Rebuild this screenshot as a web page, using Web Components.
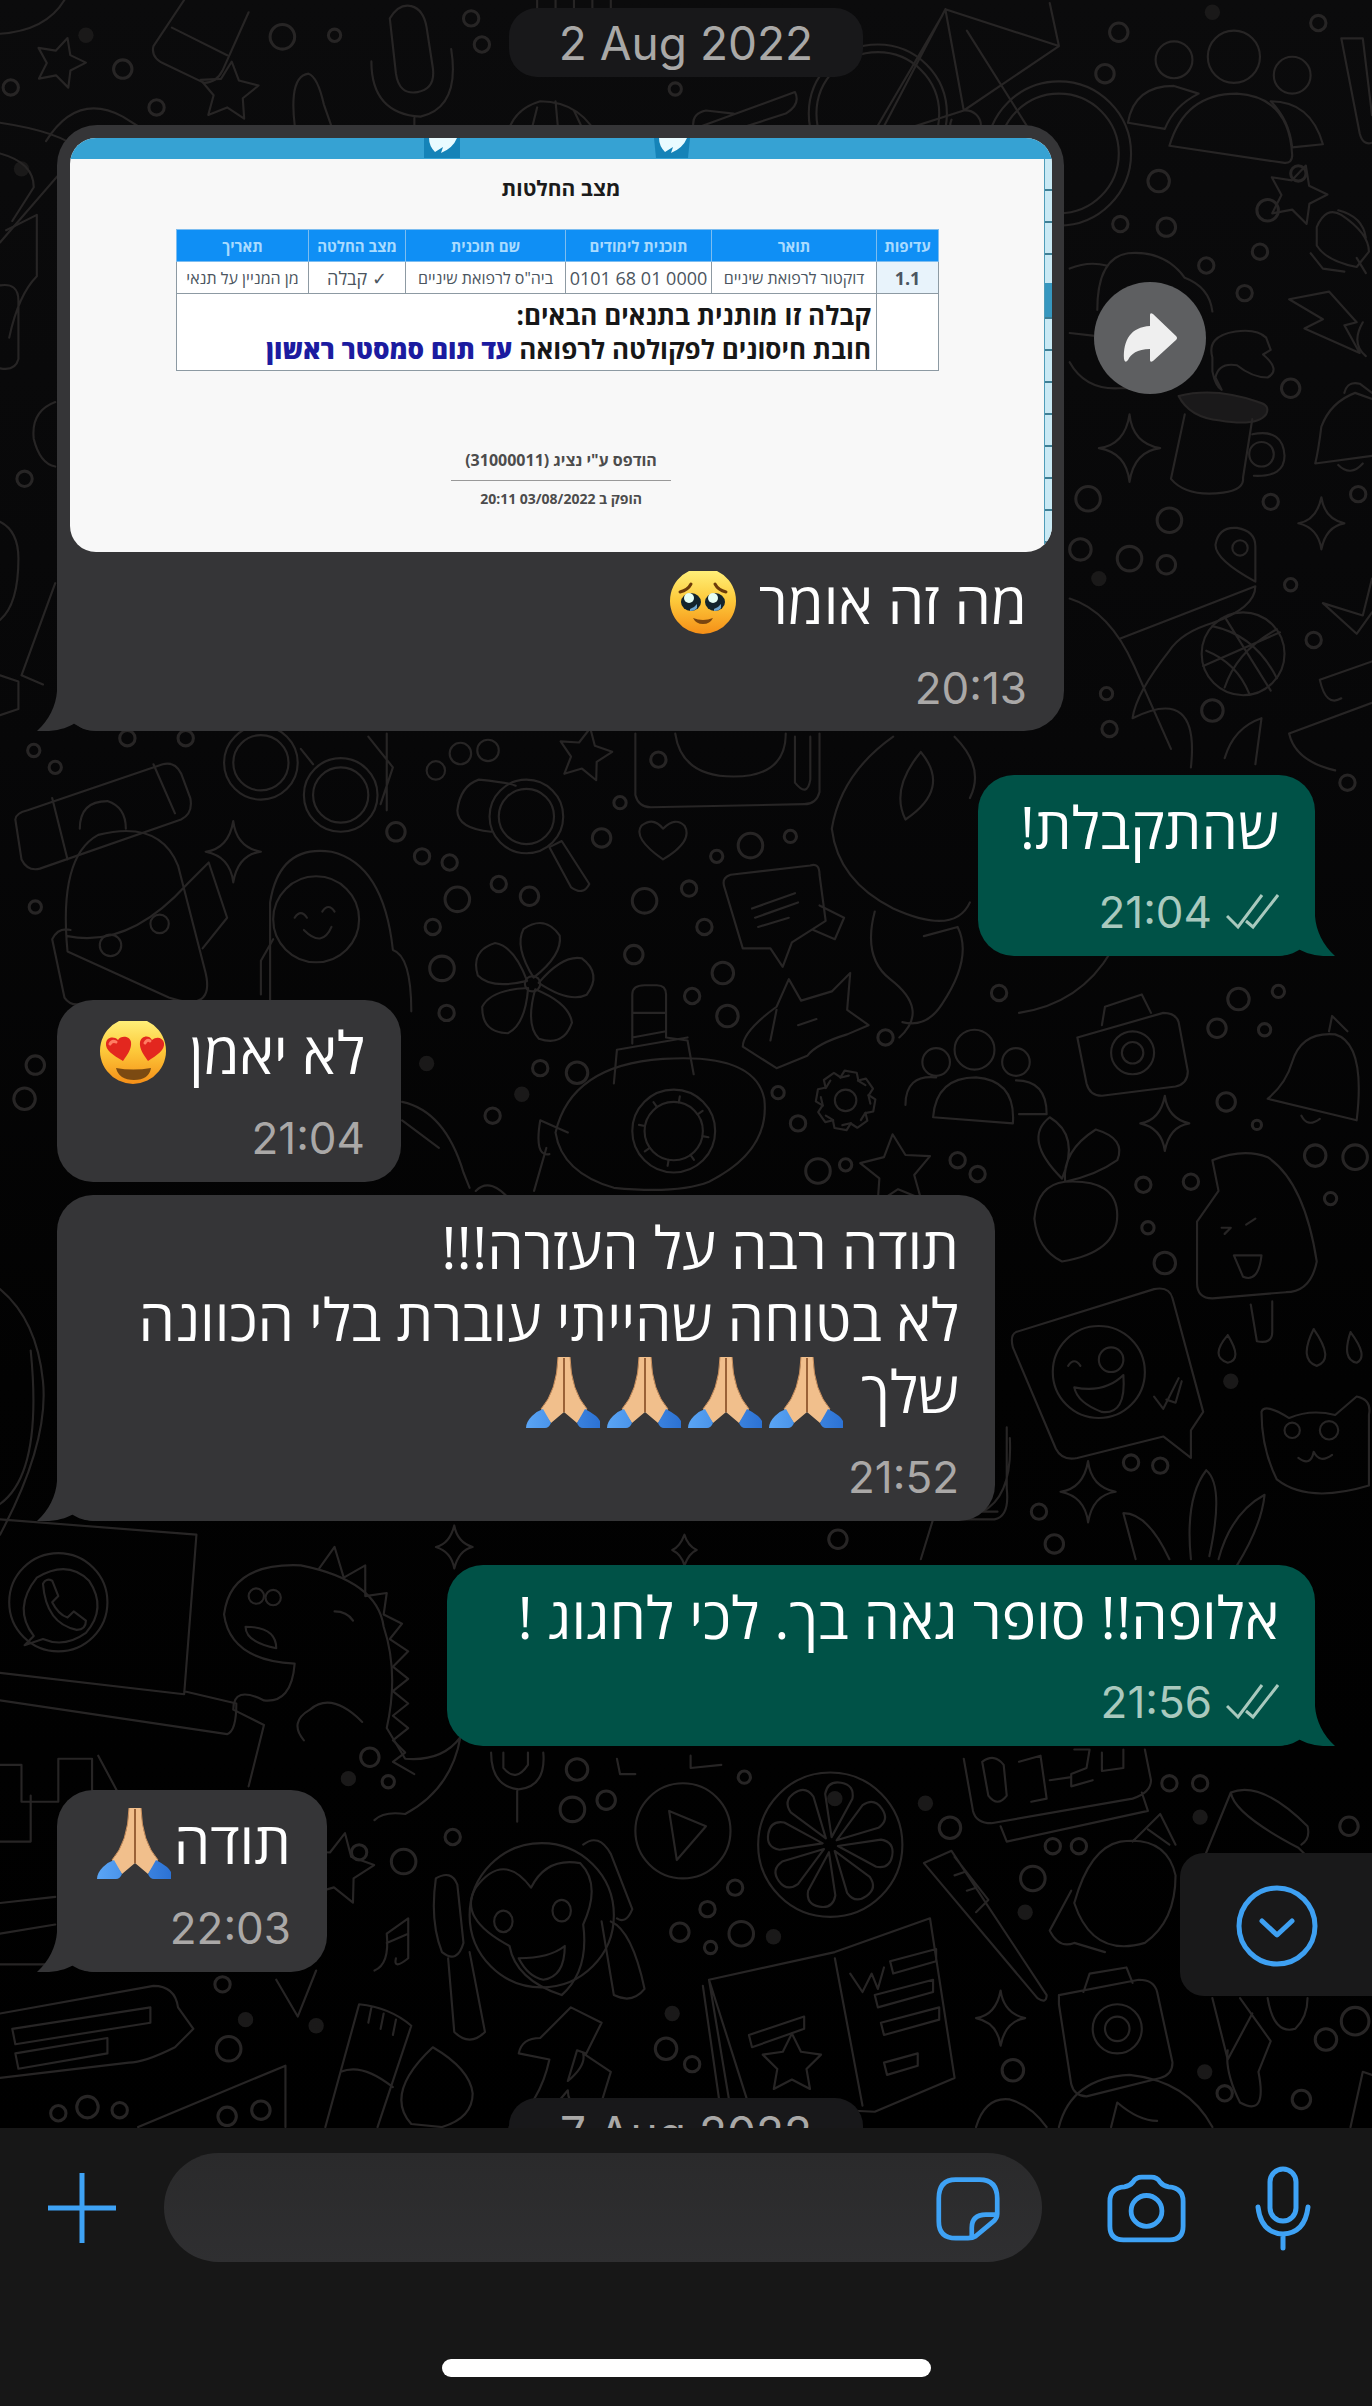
<!DOCTYPE html>
<html lang="he">
<head>
<meta charset="utf-8">
<meta name="viewport" content="width=device-width, initial-scale=1">
<title>Chat</title>
<style>
  html, body { margin: 0; height: 100%; background: #000; }
  body { font-family: Inter, "Open Sans", "Liberation Sans", sans-serif; }
</style>
</head>
<body>
<chat-screen>
  <date-pill>2 Aug 2022</date-pill>
  <chat-message side="in" tail media style="--w:1007px" time="20:13">
    <decision-letter slot="media"></decision-letter>
    מה זה אומר <emoji-icon name="plead"></emoji-icon>
    <share-button slot="aside"></share-button>
  </chat-message>
  <chat-message side="out" tail style="--w:337px" time="21:04">שהתקבלת!</chat-message>
  <chat-message side="in" followed style="--w:344px" time="21:04">לא יאמן <emoji-icon name="love"></emoji-icon></chat-message>
  <chat-message side="in" tail style="--w:938px" time="21:52">תודה רבה על העזרה!!!<br>לא בטוחה שהייתי עוברת בלי הכוונה<br>שלך <emoji-icon name="pray"></emoji-icon><emoji-icon name="pray"></emoji-icon><emoji-icon name="pray"></emoji-icon><emoji-icon name="pray"></emoji-icon></chat-message>
  <chat-message side="out" tail style="--w:868px" time="21:56">אלופה!! סופר גאה בך. לכי לחגוג !</chat-message>
  <chat-message side="in" tail last style="--w:270px" time="22:03">תודה<emoji-icon name="pray"></emoji-icon></chat-message>
  <date-pill>7 Aug 2022</date-pill>
</chat-screen>

<script>
const define = (name, html, setup) => {
  const t = document.createElement('template');
  t.innerHTML = html.trim();
  customElements.define(name, class extends HTMLElement {
    constructor() {
      super();
      this.attachShadow({ mode: 'open' }).appendChild(t.content.cloneNode(true));
    }
    connectedCallback() { if (setup) setup(this, this.shadowRoot); }
  });
};

/* Wallpaper: line doodles and scattered rings */
const rings = '729,21,6 720,48,6 859,15,5 755,118,7 730,146,5 760,148,6 786,173,5 826,137,7 846,113,5 821,164,5 811,191,5 841,253,6 885,322,5 828,327,5 709,325,8 762,339,8 704,358,7 736,364,8 760,368,6 841,381,4 856,417,5 790,463,7 721,452,4 723,475,5 184,24,8 218,23,4 80,45,6 102,70,5 7,57,5 314,29,5 307,12,5 440,58,4 16,312,5 22,489,4 36,500,4 83,481,5 121,481,5 258,542,6 275,558,5 293,562,5 392,546,6 404,523,4 429,495,5 489,551,8 515,545,4 467,558,4 23,591,4 298,586,8 325,576,5 345,584,6 282,604,5 288,631,8 291,660,5 420,587,8 449,579,5 459,604,5 413,622,6 471,634,7 451,649,5 474,662,7 352,696,5 376,699,7 321,727,5 23,694,6 16,716,7 507,712,4 520,732,5 533,763,8 551,759,4 624,756,5 637,765,5 577,676,5 651,647,5 793,670,6 824,671,4 807,651,7 833,646,4 799,718,6 819,733,3 745,772,5 776,770,5 857,753,7 883,754,8 867,781,4 759,823,7 748,800,4 737,953,5 756,955,5 677,985,5 687,1006,6 546,1003,6 878,510,5 241,1145,6 253,1161,4 295,1197,5 234,1207,5 263,1213,8 376,1153,7 373,1179,8 395,1173,6 479,1230,5 461,1244,5 443,1259,6 483,1260,8 463,1269,4 485,1158,4 619,1191,7 686,1203,5 703,1203,5 673,1224,8 762,1162,5 782,1162,5 879,1190,6 145,1293,5 149,1335,8 434,1335,7 451,1345,5 660,1349,7 798,1364,5 848,1368,6 864,1329,7 883,1317,9 38,1377,5 57,1373,7 78,1375,5 148,1379,6 170,1375,6'
  .split(' ').map(s => { const [x, y, r] = s.split(','); return `<circle cx="${x}" cy="${y}" r="${r}"/>`; }).join('');
const dots = '790,8 716,377 278,693 340,713 227,1159 668,1246 504,1262 782,1184 206,1320 160,1316 438,1312 544,1172 785,1350 802,900 603,1175 56,23 14,110'
  .split(' ').map(s => { const [x, y] = s.split(','); return `<circle cx="${x}" cy="${y}" r="5"/>`; }).join('');
const spark = (x, y, r) => `<path d="M${x} ${y - r}q2 ${r - 3} ${r - 2} ${r}q-${r - 5} 2-${r - 2} ${r}q-2-${r - 3}-${r - 2}-${r}q${r - 5}-2 ${r - 2}-${r}z"/>`;
const star = (x, y, r, a) => {
  let d = '';
  for (let i = 0; i < 10; i++) {
    const q = a + i * Math.PI / 5, k = i % 2 ? r / 2 : r;
    d += (i ? 'L' : 'M') + (x + k * Math.sin(q)).toFixed(1) + ' ' + (y - k * Math.cos(q)).toFixed(1);
  }
  return `<path d="${d}z"/>`;
};
const petals = (x, y, n, inner) => Array.from({ length: n }, (_, i) => `<path transform="translate(${x} ${y}) rotate(${i * 360 / n + 10})" d="${inner}"/>`).join('');

define('chat-wallpaper', `
<style>:host{display:block;position:absolute;inset:0;overflow:hidden;background:linear-gradient(#0b0b0c 0,#070708 35%,#020202 65%,#000 100%)}
svg{display:block;width:100%;height:auto}</style>
<svg viewBox="0 0 894 1387" fill="none" stroke="#272525" stroke-width="1.4" stroke-linejoin="round" stroke-linecap="round" aria-hidden="true">
<g stroke-width="2">${rings}</g><g fill="#1a1919" stroke="none">${dots}</g>
${spark(736, 292, 22)}${spark(861, 341, 17)}${spark(152, 555, 20)}${spark(759, 732, 18)}${spark(709, 972, 20)}${spark(652, 1315, 18)}${spark(296, 1008, 14)}${spark(446, 1010, 10)}
${star(39, 41, 17, .3)}${star(149, 60, 20, .1)}${star(845, 127, 20, .3)}${star(381, 492, 18, .2)}${star(584, 763, 24, -.1)}${star(516, 1345, 20, 0)}${star(220, 1218, 24, .2)}
<!-- top left -->
<path d="M120 0L100 30q-2 8 8 12l25 12q8 0 12-8L162 8M112 18l36 18M0 22q30-2 42-22M0 80q40 6 52 18l-52 60M195 100q-10-50 6-52q6 2 10 20l14 40M30 92q20-32 50-16l16 10"/>
<path d="M254 12q6-10 14-8t10 14l4 26q2 14-10 16t-14-12zM242 40q0 34 32 36q26-6 20-44M270 77v40M240 118q30 10 54-6M330 92q2-20 22-26q28 0 40 28M350 70l-10 40M362 66l4 44M374 72l16 34M350 0v6M362 0v6M374 0v6M386 0v6M398 0v6"/>
<path d="M452 84l66-24q4 8-6 14l-50 16zM452 84q-2-10 8-12l18 2"/>
<circle cx="572" cy="74" r="45"/><circle cx="572" cy="74" r="40"/><circle cx="690" cy="100" r="47"/><circle cx="690" cy="100" r="39"/>
<path d="M572 90l44-84 74 24-62 42zM616 6l12 66M630 20l58 92M566 92l48-82M690 30l-6-28M628 72a10 10 0 1 1-8 6"/>
<!-- people -->
<circle cx="804" cy="37" r="17"/><circle cx="765" cy="39" r="12"/><circle cx="842" cy="49" r="12"/>
<path d="M762 95q10-34 44-34q34 2 36 40q0 6-6 5zM735 80q4-24 30-24l16 5q-16 8-22 23zM828 66q26 0 34 28l-20 2q-2-18-14-30zM874 25l12 62q2 8 8 6M874 25h14l6 50"/>
<!-- guitar, bolt, cap, cup, bell -->
<path d="M862 148q6-14 16-8q18 12 18 24l-8 10q-20-4-26-14zM858 165l8 10 14 2M876 137q16 4 18 18M844 195l26-5 18 20-8 2 10 18-36-16 12-6zM888 168l6 10M892 210q-8 14 2 22" transform="translate(-4 0)"/>
<path d="M715 202q0-34 20-37q24-2 37 16q16 6 18 22M697 175q12-5 24-2M697 217l18 2M697 236q10 18 32 17h18"/>
<path d="M790 233q-4-14 15-17q14-2 20 4l3 8-5 3q12 10 3 15-10 0-20-8-12-2-14 8l4 8q-4-2-6-12z"/>
<path d="M768 258q24-6 52 4 8 2 5 8-6 8-30 4-20-2-27-16z" fill="#1a191a"/><path d="M772 270l-9 42q10 12 34 9q14-2 13-10l6-38"/><circle cx="822" cy="296" r="8"/><path d="M816 283q20-4 21 14 0 14-20 13"/>
<path d="M857 302l37-5M857 302q2-8 4-24 6-16 22-22l11 4M876 256q2-8 10-6l8 6M872 303q8 8 16-1"/>
<path d="M818 379q-26-14-26-24 2-12 14-11 12 2 12 12z" /><circle cx="808" cy="357" r="5"/>
<circle cx="810" cy="426" r="27"/><path d="M790 408q28 6 42 34M798 402l30 48M786 424q20 8 28 28M832 410q-26 14-34 38M784 434l50-22"/>
<path d="M730 416l88-34q0 14-28 24-20 6-28 18-22 28-24 44 44-22 38 32M697 390q26 8 42 44t24 54M862 393l26 8 6-24M862 393l22 20 10-14M860 443l34-12M860 443q4 18 14 12M840 478l54-20M840 478q4 18 30 24M798 494q6-20 24-26l-4 30"/>
<!-- left margin -->
<path d="M0 100q22 6 22 22l-14 22M4 150l20-10v40q-12 12-18 40M0 186q12-2 12 10v38q-2 8-12 6M36 262q-16 6-14 24 4 16 14 18M0 340q12 6 12 24 0 30-12 40M36 380l-22 60 14 6M0 440l12 4v18l-12 4"/>
<!-- middle -->
<path d="M10 534l4 26q4 8 12 6l92-32q8-4 6-14l-6-16q-4-8-12-6l-88 30q-8 2-8 6zM34 520l10 40M100 498l14 32M52 540q0-18 18-18 12 4 12 18"/>
<circle cx="170" cy="497" r="24"/><circle cx="170" cy="497" r="18"/><circle cx="222" cy="518" r="24"/><circle cx="222" cy="518" r="18"/><path d="M196 488l8 10M240 480l16 20-8 24M252 478v50"/>
<path d="M44 620q-6-62 20-76 40-10 52 20l18 70q6 26-24 16zM34 612q4-8 12-6M34 612l8 38q4 6 12 4M44 610q40 8 78-34l14-14 12 36-16 20"/>
<circle cx="72" cy="616" r="7"/><circle cx="104" cy="602" r="6"/>
<path d="M176 652v-64q6-38 40-33 34 8 40 64 12 4 12 40"/><circle cx="206" cy="599" r="28"/><path d="M192 598q4-6 8 0M210 594q4-6 8 0M198 606q12 12 18-2M170 648v-22l8-14"/>
<circle cx="343" cy="532" r="24"/><circle cx="343" cy="532" r="18"/><path d="M358 552l8-4 18 28q-4 8-12 2zM320 542q-22-2-22-14 2-16 14-20 20 2 24 4"/><circle cx="300" cy="491" r="7"/><circle cx="318" cy="489" r="7"/><circle cx="284" cy="502" r="6"/>
<path d="M432 560q-20-14-14-22 8-6 14 2 8-8 14-2 6 10-14 22M414 478l0 40q2 8 10 8l100-2q8 0 10-8v-38M440 478q4 28 38 28t34-28M518 480v30q8 10 10-2v-28"/>
${petals(347, 641, 5, 'M0-4q-16-18-12-30 12-12 24 0 4 12-12 30z')}<circle cx="347" cy="641" r="5"/>
<path d="M472 578q-2-6 4-8l52-6q6-2 6 6l4 30-22 14-6 16-8-12-18 0zM490 592l28-10M492 598l28-10M494 604l20-6M534 590l16 8-6 14-14-6"/>
<path d="M582 480q-34 24-40 60 4 34 40 52 40 18 50-4M600 490q20 24-10 44-10-20 10-44M570 594q-8 30 10 44 26 20 6 38M622 480q20 20 10 40M602 610l22-6q10 20-10 50-10 16-26 12M664 660q40-6 60-40"/>
<path d="M484 682q0-10 22-26l8-18 8 14 20-6 12-12-2 24 14 10-14 6q-20 6-26 14l-20 8zM506 658l-4 20M520 668l12-4"/>
<path d="M412 680v-32q0-6 8-6h8q6 0 6 6v28l14 2 4 22M412 676l22-4M400 706l2-22 46-8M412 660h22"/>
<path d="M362 738q10-44 70-48 60-4 66 26 4 34-36 54-20 8-62 4-34-10-38-36M370 738l-18-8q-4 24 6 22M356 748l-8 28"/><circle cx="439" cy="737" r="27"/><circle cx="439" cy="737" r="19"/>
${petals(439, 737, 8, 'M0-19v-4')}
<path d="M262 718q28 6 40 46l4 10M262 730l24 18M310 776q10-10 24 8v14"/>
<circle cx="551" cy="717" r="7"/>${petals(551, 717, 8, 'M-6-14l2-5h8l2 5l5 2')}
<circle cx="635" cy="684" r="13"/><circle cx="610" cy="692" r="9"/><circle cx="662" cy="692" r="9"/><path d="M608 728q2-26 28-26 26 2 24 30zM590 720q0-20 20-18M662 704q20 0 20 22l-18 0"/>
<path d="M702 676l56-16q8 0 10 6l6 32q0 8-8 10l-48 6q-8 0-10-8zM718 668l2-12 24-8 6 12"/><circle cx="738" cy="686" r="14"/><circle cx="738" cy="686" r="7"/>
<path d="M826 716q12-10 16-24 6-20 28-18 20 6 14 56zM848 727q4 8 12 2M866 672l2-10 10 10"/>
<path d="M692 822q-16-8-18-28 2-22 20-24 34-2 34 22 0 24-36 30zM694 770q-2-20 20-34 20 6 14 20-14 10-34 14M692 768q-26-26-8-40 20 12 8 40"/>
<path d="M790 846q-10 0-10-10v-40l14-20-4-20q20-8 36-2 24 16 32 68-4 20-20 20zM815 850l4 24q10 2 10-6v-20M796 800l6 0-4 4M818 794l-6 4M804 818h18q-2 18-12 14z"/>
<path d="M662 868l90-28q10-2 12 6l20 74-8 12v18l-18-14-56 14q-10 2-14-6l-28-66q-2-8 2-10z"/><circle cx="716" cy="894" r="30"/><circle cx="724" cy="886" r="8"/><path d="M700 904q20 4 32-8 2 26-14 24-16-6-18-16zM696 890q4-6 8 0M752 910l6 8 10-20M760 912l6 2 4-14"/>
<path d="M800 870q10 16 0 18-12-4 0-18M856 866q14 20 2 24-12-4-2-24M880 868q12 16 4 20-10-2-4-20"/>
<path d="M822 920q2-6 18 4 14-6 30-2l14-12q10 2 8 12v46q-40 12-60-4-10-20-10-44z"/><circle cx="842" cy="932" r="5"/><circle cx="866" cy="932" r="6"/><path d="M846 950q8 6 10-4 4 8 12 2"/>
<path d="M740 1016l-8-30q16 0 30 30M776 1016q-4-40 10-58 12 10 2 56M794 1016q8-30 30-42-2 20-18 46M650 985h-10q20-10 18-48M600 1016l8-26 40 0q10-2 8-20v-40"/>
<path d="M0 840q24 20 28 60 4 40-28 100M0 990l128 10-8 104-120-14M20 880q8 80-20 100M0 1108l148 22q6-2 6-20l-34-8"/>
<circle cx="38" cy="1044" r="32"/><path d="M22 1066q-14-18 2-38 20-12 34 2 12 18-2 34-14 10-28 4l-12 4z"/><path d="M28 1032q2-4 6-2l4 10-4 4q4 8 10 10l4-4 8 6q0 6-6 6-20-4-22-30z"/>
<!-- lower half -->
<path d="M146 1052q4-34 50-32 50 10 54 40 10 30 2 66l12 20q24 2 36-14-6 34-36 50-14-2-20 4M146 1052q4 30 46 32-2 26-20 24-20-10-20 6 8 4 20 10l-10 40M236 1122q-20-20-34-8-14 8-4 20M218 1050q8 0 12 6M160 1060q20 0 20 14-20-4-20-14z"/><circle cx="167" cy="1040" r="5"/><circle cx="178" cy="1041" r="5"/>
<path d="M208 1022l10-14 6 20 14-8v20l14-2-2 14 12 6-8 10 12 8-10 10 10 8-10 8 10 8-10 8 10 8-10 8 8 8-8 6 14 8"/>
<path d="M0 1150h14v24h24v-28h22v28h20l-16-30M0 1200h20v-30M0 1240l36-4M0 1260l36-6M0 1280h30"/>
<path d="M0 1312l100-18q14 0 16 14l10 14-12 12q-20 10-30 10l-84 10M8 1322l90-14v10l-88 14zM10 1338l60-10v10l-58 10zM180 1290l14 24 12-30"/>
<path d="M212 1386l22-80q20 2 34 14l-22 66M222 1350q14-6 34 10M90 1386l96-40v40M242 1308l-2 10M250 1312l-2 10M258 1316l-2 10"/>
<path d="M244 1284q10-4 8-24l14-10v26q-10 8-8 0M252 1266l14-6"/>
<circle cx="445" cy="1193" r="31"/><path d="M436 1180l24 10-19 22z"/>
<circle cx="541" cy="1202" r="47"/>${petals(541, 1202, 8, 'M0-5L-9-32q0-9 9-9t9 9z')}
<path d="M320 1142q0 22 18 24 18-2 16-24M328 1142v10q8 10 16-2v-8M337 1167v20M402 1146l2 10h10M450 1144v8l20-2M628 1146l6 34q2 8 12 8l92-16q12-4 12-12l-4-20M652 1190l4 10 92-20-4-12"/>
<path d="M640 1148q8-6 14 2l2 20q-6 8-12 0zM664 1148l14-4 4 28-10 2M684 1160l14-2M700 1140l10 0-2 12-10 4v8l14-4M718 1142v12l14-2v-12"/>
<circle cx="353" cy="1248" r="47"/><path d="M346 1230q10-20 32-16 14 14 2 40 4 30-14 46-30-10-34-32-34-18-22-38 18-24 36 0zM338 1276q20 0 30-8 0 20-14 22-10-2-16-14z"/><ellipse cx="328" cy="1252" rx="6" ry="7"/><ellipse cx="366" cy="1245" rx="6" ry="7"/>
<path d="M284 1224q10-6 14 4l4 38q-4 14-14 6-8-20-4-48zM292 1276l4 48q10 10 20 0l-10-52M380 1202q10-8 18 6l14 36q-4 10-10 6M398 1252q14 6 22 44-8 10-20 4l-8-48"/>
<path d="M462 1290l82-18 62-22 16 104-52 22-82-4zM544 1276l18 96M462 1290l14 84M458 1294l12 84M554 1286l8 12 6-12 4 10 4-14M580 1278l30-8v8l-28 8zM570 1300l38-10v8l-36 10zM574 1318l38-10v8l-36 10zM576 1344l22-6v8l-20 6zM488 1326l36-12v8l-34 12z"/>
<path d="M602 1214l18-8 62 94q0 6-6 2zM622 1210l22 28-8 8M622 1222l6-2M630 1232l6-2"/>
<path d="M700 1240q10-36 30-40 30-4 36 22 0 30-20 44-34 10-46-26zM698 1232l-14 26q6 12 16 8l20 6M738 1200l18-18 10 20M748 1192l14 10"/>
<path d="M690 1300l52-10q10 0 12 8l10 46q0 8-8 10l-48 12q-8 0-10-8l-8-52q0-6 0-6zM706 1298l4-12 24-4 4 10"/><circle cx="728" cy="1322" r="16"/><circle cx="728" cy="1322" r="8"/>
<path d="M802 1168q20-8 50 22 2 8-4 12M802 1168l-18 44M802 1168q2 14 44 36l8 8M790 1302l10 40 16-30M808 1302l20 28-8 20q6 30-12 20-10-20-8-34M826 1302q4 24 18 20 8-8 8-20M880 1386l8-36 6 2"/>
<path d="M332 1386q20-16 26-44l-20-4q2-10 14-10l20-20 20 10-10 20-6-2-6 20q12-10 10-18l18 12-8 26q-20 0-20-14l-20 24"/>
<path d="M268 1384q-18-20 14-50 24 14 26 30 0 16-20 22z"/><path d="M690 1386q8-32 46-34 38 4 54 34M724 1386l4-16q14 12 26 12M636 1386q6-20 22-18 14 4 24 18"/>
</svg>`);

const face = '<defs><linearGradient id="f" x2="0" y2="1"><stop stop-color="#ffef78"/><stop offset=".45" stop-color="#fdcb3c"/><stop offset="1" stop-color="#f58f17"/></linearGradient></defs><path d="M26 4h28a33 33 0 1 1-28 0z" fill="url(#f)"/>';
const emoji = {
  plead: face + '<path d="M17 25q8-2 11-8M63 25q-8-2-11-8" fill="none" stroke="#6b3b0a" stroke-width="3" stroke-linecap="round"/><ellipse cx="28" cy="35" rx="10" ry="9" fill="#13242c"/><ellipse cx="52" cy="35" rx="10" ry="9" fill="#13242c"/><circle cx="26" cy="31" r="5" fill="#e6fff4"/><circle cx="50" cy="31" r="5" fill="#e6fff4"/><path d="M27 42q4-1 7-5v4q-2 3-7 3zM51 42q4-1 7-5v4q-2 3-7 3z" fill="#6fa6cf"/><path d="M30 51q10 4 20 0-3 6-10 6t-10-6z" fill="#7a4510"/>',
  love: face + '<path d="M30 44C20 38 12 33 13 26c1-6 8-7 12-3 3-5 12-4 13 2 1 7-4 13-8 19zM55 44c-4-6-9-12-8-19 1-6 9-8 12-2 5-4 11-2 12 3 1 7-7 12-16 18z" fill="#e3271f"/><path d="M17 27q2-4 6-2M52 26q2-4 5-2" stroke="#ff7d63" stroke-width="3" fill="none" stroke-linecap="round"/><path d="M23 51q17 3 35 0-2 12-17 12T23 51z" fill="#7b4a12"/>',
  pray: '<defs><linearGradient id="b" x2="1"><stop stop-color="#5aa5f5"/><stop offset="1" stop-color="#2c72d4"/></linearGradient></defs><path d="M36 1h12q1 34 17 52l-10 14-13-11-13 11-10-14Q35 35 36 1z" fill="#f1bf8c"/><path d="M42 2v54" stroke="#9a6238" stroke-width="2"/><path d="M36 1Q35 35 19 53M48 1q1 34 17 52" fill="none" stroke="#c98f5d"/><path d="M21 53l8 14q-2 5-6 5H4q0-6 6-12 5-5 11-7zM63 53l-8 14q2 5 6 5h17v-7q-2-5-15-12z" fill="url(#b)"/>'
};
define('emoji-icon', '<style>:host{display:inline}svg{display:inline-block;width:81px;height:72px;margin-top:-20px;vertical-align:-15px}</style><span></span>',
(el, root) => {
  const n = el.getAttribute('name');
  root.querySelector('span').innerHTML = `<svg viewBox="0 0 81 72" role="img" aria-label="${n}">${emoji[n]}</svg>`;
});

define('date-pill', `
<style>:host{display:block;align-self:center;box-sizing:border-box;min-width:354px;padding:13px 40px 12px;border-radius:28px;background:#18181a;color:#a9a8a7;font-size:46px;line-height:44px;text-align:center;direction:ltr}
:host(:first-of-type){margin-bottom:48px}</style><slot></slot>`);

define('share-button', `
<style>:host{display:block;margin-top:157px}
button{display:grid;place-items:center;width:112px;height:112px;border:0;border-radius:50%;background:#5e5f61;padding:0}</style>
<button aria-label="Forward"><svg width="56" height="52" viewBox="0 0 56 52" fill="#efefef"><path d="M28 3q0-3 3-1l23 22q2 2 0 4L31 49q-3 2-3-1V37C15 37 9 42 6 48q-3 4-4-1C1 28 9 15 28 14z"/></svg></button>`);

define('chat-message', `
<style>
:host{display:flex;gap:30px;align-items:flex-start;margin-bottom:44px;--c:#353537}
:host([side=out]){justify-content:flex-end;--c:#005247}
:host([followed]){margin-bottom:13px}
:host([last]){margin-bottom:126px}
.bubble{position:relative;box-sizing:border-box;width:var(--w);max-width:100%;background:var(--c);border-radius:36px;padding:16px 36px 22px;display:flex;flex-direction:column;gap:27px}
:host([media]) .bubble{padding:13px 12px 21px 13px;border-radius:40px;gap:14px}
:host([media]) .words,:host([media]) .meta{padding-right:25px}
:host([media]) .meta{margin-top:13px}
.words{direction:rtl;text-align:right;font-family:"Open Sans","Noto Sans",sans-serif;font-size:58px;line-height:72px;color:#fff;white-space:nowrap}
.meta{display:flex;justify-content:flex-end;align-items:center;gap:14px;font-size:44px;font-weight:400;line-height:44px;color:#aaa8a7}
:host([side=out]) .meta{color:#a9c9be}
.tick,.tail{display:none}
:host([side=out]) .tick{display:block}
:host([tail]) .tail{display:block;position:absolute;bottom:0;left:-20px;fill:var(--c)}
:host([tail][side=out]) .tail{left:auto;right:-20px;transform:scaleX(-1)}
</style>
<div class="bubble">
<svg class="tail" width="60" height="40" viewBox="0 0 60 40"><path d="M20 0C19 15 12 29 0 40h12c12-1 20-4 26-8 5 5 11 8 22 8V0z"/></svg>
<slot name="media"></slot>
<div class="words"><slot></slot></div>
<div class="meta"><time></time><svg class="tick" width="53" height="36" viewBox="0 0 53 36" fill="none" stroke="currentColor" stroke-width="3"><path d="M1 22l11 11L36 1M20 27l7 6L52 1"/></svg></div>
</div>
<slot name="aside"></slot>`,
(el, root) => {
  root.querySelector('time').textContent = el.getAttribute('time');
  if (!el.hasAttribute('media')) root.querySelector('slot[name=media]').remove();
  if (!el.querySelector('[slot=aside]')) root.querySelector('slot[name=aside]').remove();
});

define('decision-letter', `
<style>
:host{display:block;position:relative;height:414px;box-sizing:border-box;border-radius:26px;overflow:hidden;background:#f8f8f8;color:#1b1b1b;direction:rtl;font-family:"Open Sans","Noto Sans",sans-serif}
.band{height:21px;background:#36a2d3;display:flex;justify-content:center;gap:194px;padding-right:8px}
.edge{position:absolute;right:0;top:21px;bottom:0;width:8px;background:repeating-linear-gradient(#c9e9f4 0 30px,#3f7f95 30px 32px);border-left:1px solid #4f9cb8;box-sizing:border-box}
.edge i{position:absolute;top:124px;height:34px;left:0;right:0;background:#3797bf}
h2{margin:14px 12px 0;font-size:21px;line-height:30px;font-weight:700;text-align:center}
table{border-collapse:collapse;table-layout:fixed;width:762px;margin:26px 113px 0 0;background:#fff;font-size:16px;line-height:24px}
th{background:#0f8ff5;color:#a9dbff;height:31px;padding:0;border:1px solid #7dbdf0;font-weight:700;font-size:15px;white-space:nowrap}
td{height:31px;padding:0 3px;border:1px solid #8d9aa3;color:#4b5560;white-space:nowrap;text-align:center}
.n{background:#e8f3fb;font-weight:700;font-size:18px}
.c{font-size:18px}
.big td{height:76px;font-size:26px;line-height:34px;font-weight:700;color:#171717;padding:0 5px;text-align:right}
.big b{color:#1b1ba0}
.foot{width:220px;margin:77px auto 0;text-align:center;font-size:16px;font-weight:700;line-height:24px;color:#4c4c4c;white-space:nowrap}
.foot p{margin:0}.foot p+p{border-top:1px solid #999;margin-top:8px;padding-top:6px;font-size:14px}
</style>
<div class="band"><svg width="36" height="21"><path fill="#1583b8" d="M0 0h36l-2 20H2z"/><path fill="#e9fbff" d="M5 0h28q-4 10-16 15l2-6-8 5q-6-6-6-14z"/></svg><svg width="36" height="21"><path fill="#1583b8" d="M0 0h36v20H0z"/><path fill="#e9fbff" d="M5 0h28q-4 10-16 15l2-6-8 5q-6-6-6-14z"/></svg></div>
<div class="edge"><i></i></div>
<h2>מצב החלטות</h2>
<table>
<colgroup><col style="width:62px"><col style="width:165px"><col style="width:146px"><col style="width:160px"><col style="width:97px"><col style="width:132px"></colgroup>
<tr><th>עדיפות</th><th>תואר</th><th>תוכנית לימודים</th><th>שם תוכנית</th><th>מצב החלטה</th><th>תאריך</th></tr>
<tr><td class="n">1.1</td><td>דוקטור לרפואת שיניים</td><td class="c" dir="ltr">0101 68 01 0000</td><td>ביה"ס לרפואת שיניים</td><td class="c">✓ קבלה</td><td>מן המניין על תנאי</td></tr>
<tr class="big"><td></td><td colspan="5">קבלה זו מותנית בתנאים הבאים:<br>חובת חיסונים לפקולטה לרפואה <b>עד תום סמסטר ראשון</b></td></tr>
</table>
<div class="foot"><p>הודפס ע"י נציג (31000011)</p><p>הופק ב 03/08/2022 20:11</p></div>`);

define('scroll-button', `
<style>:host{display:block;position:absolute;right:0;bottom:132px}
button{display:grid;place-items:center;width:192px;height:143px;border:0;border-radius:24px 0 0 24px;background:#19191a;padding:0}</style>
<button aria-label="Scroll to latest"><svg width="84" height="84" viewBox="0 0 84 84" fill="none" stroke="#3ea0f2" stroke-width="5"><circle cx="43" cy="43" r="38"/><path d="M28 38l15 14 15-14" stroke-linecap="round" stroke-linejoin="round"/></svg></button>`);

define('composer-bar', `
<style>
:host{display:block;position:relative;background:#171717;flex:none}
form{display:flex;align-items:center;padding:25px 57px 0 37px;margin:0}
button{border:0;padding:0;background:none;color:#3ea2f5;display:grid;place-items:center;flex:none}
svg{fill:none;stroke:currentColor;stroke-width:5;stroke-linecap:round;stroke-linejoin:round;display:block}
.field{flex:1;display:flex;align-items:center;height:109px;box-sizing:border-box;margin:0 65px 0 37px;padding:0 41px 0 44px;border-radius:55px;background:linear-gradient(#2a2a2b,#2f2f31)}
input{flex:1;min-width:0;border:0;outline:0;background:none;color:#fff;font:44px Inter,sans-serif}
.cam{margin-right:65px}
.home{width:489px;max-width:40%;height:18px;border-radius:9px;background:#fff;margin:97px auto 0}
.wrap{padding-bottom:29px}
</style>
<div class="wrap"><form onsubmit="return false">
<button type="button" aria-label="Add"><svg width="90" height="80" viewBox="0 0 90 80"><path d="M45 5v70M11 40h68" stroke-linecap="butt"/></svg></button>
<div class="field"><input type="text" aria-label="Message"><button type="button" aria-label="Stickers"><svg width="66" height="66" viewBox="0 0 70 70"><path d="M22 5h25q19 0 19 20v16q0 5-5 9L43 65q-3 2-8 2H22Q4 67 4 49V25Q4 5 22 5z"/><path d="M65 42H54Q39 42 39 56v10"/></svg></button></div>
<button type="button" class="cam" aria-label="Camera"><svg width="79" height="72" viewBox="0 0 82 74"><path d="M18 14q6-1 9-5 3-5 9-5h10q6 0 9 5 3 4 9 5 15 1 15 15v26q0 14-14 14H17Q3 69 3 55V29Q3 15 18 14z" transform="translate(0 1)"/><circle cx="41" cy="40" r="16"/></svg></button>
<button type="button" aria-label="Voice message"><svg width="64" height="86" viewBox="0 0 64 86"><rect x="19" y="4" width="26" height="52" rx="13"/><path d="M7 42q3 26 25 27 22-1 25-27M32 69v14"/></svg></button>
</form><div class="home"></div></div>`);

define('chat-screen', `
<style>
:host{display:flex;flex-direction:column;height:100vh;overflow:hidden;background:#000}
main{position:relative;flex:1;min-height:0;overflow:hidden}
.thread{position:relative;display:flex;flex-direction:column;padding:8px 57px 0}
</style>
<main><chat-wallpaper></chat-wallpaper><div class="thread"><slot></slot></div><scroll-button></scroll-button></main>
<composer-bar></composer-bar>`);
</script>
</body>
</html>
